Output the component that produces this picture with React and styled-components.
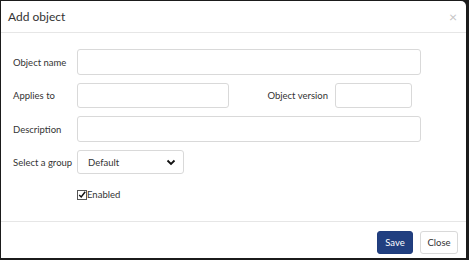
import React from 'react'
import styled, { createGlobalStyle } from 'styled-components'

const GlobalStyle = createGlobalStyle`
  html, body {
    margin: 0;
    padding: 0;
    background: #1b1b1b;
  }
  body {
    font-family: Lato, "Noto Sans", Arial, sans-serif;
    color: #333;
  }
`;

const Frame = styled.div`
  width: 469px;
  height: 260px;
  box-sizing: border-box;
  padding: 1px 3px 2px 1px;
`;

const Modal = styled.div`
  display: flex;
  flex-direction: column;
  height: 100%;
  background: #fff;
  border-radius: 0 5px 0 0;
`;

const Header = styled.div`
  display: flex;
  align-items: center;
  justify-content: space-between;
  height: 31px;
  padding: 0 9px 0 7px;
  border-bottom: 1px solid #e6e6e6;
`;

const Title = styled.h4`
  margin: 0;
  font-size: 12px;
  font-weight: 400;
  color: #333;
`;

const CloseX = styled.span`
  font-size: 14px;
  color: #c4c4c4;
  line-height: 1;
`;

const Body = styled.div`
  flex: 1;
  display: flex;
  flex-direction: column;
  gap: 8px;
  padding: 16px 12px 0 12px;
`;

const Row = styled.div`
  display: flex;
  align-items: center;
`;

const Label = styled.label`
  width: 64px;
  flex-shrink: 0;
  font-size: 9.5px;
  color: #333;
  white-space: nowrap;
`;

const SideLabel = styled.label`
  width: 106px;
  padding-right: 7px;
  box-sizing: border-box;
  text-align: right;
  font-size: 9.5px;
  color: #333;
  white-space: nowrap;
`;

const Input = styled.input`
  box-sizing: border-box;
  width: ${p => p.w}px;
  height: ${p => p.h || 26}px;
  margin: 0;
  border: 1px solid #d9d9d9;
  border-radius: 3px;
  background: #fff;
  outline: none;
`;

const Select = styled.div`
  box-sizing: border-box;
  display: flex;
  align-items: center;
  justify-content: space-between;
  width: 107px;
  height: 24px;
  padding: 0 7px 0 10px;
  border: 1px solid #d9d9d9;
  border-radius: 3px;
  font-size: 9.5px;
  color: #333;
`;

const CheckRow = styled.div`
  display: flex;
  align-items: center;
  padding-left: 64px;
  margin-top: 7px;
  font-size: 9.5px;
  color: #333;
`;

const Box = styled.span`
  box-sizing: border-box;
  display: inline-flex;
  align-items: center;
  justify-content: center;
  width: 10px;
  height: 10px;
  border: 1px solid #555;
  background: #fff;
`;

const Footer = styled.div`
  display: flex;
  justify-content: flex-end;
  align-items: flex-start;
  gap: 7px;
  height: 37px;
  padding: 9px 8px 0 0;
  box-sizing: border-box;
  border-top: 1px solid #e6e6e6;
`;

const Button = styled.button`
  width: ${p => (p.primary ? 36 : 38)}px;
  height: 23px;
  padding: 0;
  border-radius: 3px;
  font-family: inherit;
  font-size: 9.5px;
  border: 1px solid ${p => (p.primary ? '#1f3c7c' : '#d9d9d9')};
  background: ${p => (p.primary ? '#213f80' : '#fff')};
  color: ${p => (p.primary ? '#fff' : '#333')};
`;

const App = () => {
  return (
    <Frame>
      <GlobalStyle />
      <Modal>
        <Header>
          <Title>Add object</Title>
          <CloseX>×</CloseX>
        </Header>
        <Body>
          <Row>
            <Label>Object name</Label>
            <Input w={344} />
          </Row>
          <Row>
            <Label>Applies to</Label>
            <Input w={152} h={25} />
            <SideLabel>Object version</SideLabel>
            <Input w={77} h={25} />
          </Row>
          <Row>
            <Label>Description</Label>
            <Input w={344} />
          </Row>
          <Row>
            <Label>Select a group</Label>
            <Select>
              Default
              <svg width="10" height="7" viewBox="0 0 10 7">
                <polyline points="1.5,1.5 5,5 8.5,1.5" fill="none" stroke="#111" strokeWidth="1.8" />
              </svg>
            </Select>
          </Row>
          <CheckRow>
            <Box>
              <svg width="10" height="10" viewBox="0 0 10 10">
                <polyline points="1.5,5 4,7.5 9,1" fill="none" stroke="#111" strokeWidth="1.8" />
              </svg>
            </Box>
            Enabled
          </CheckRow>
        </Body>
        <Footer>
          <Button primary>Save</Button>
          <Button>Close</Button>
        </Footer>
      </Modal>
    </Frame>
  )
}

export default App;
